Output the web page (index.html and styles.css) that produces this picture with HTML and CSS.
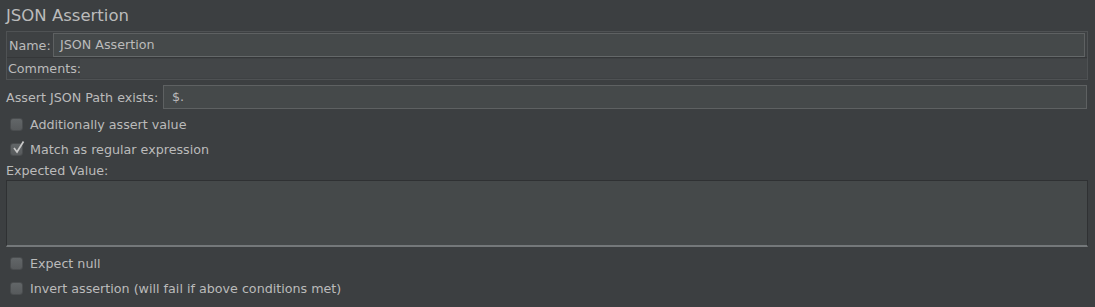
FILE: index.html
```html
<!DOCTYPE html>
<html>
<head>
<meta charset="utf-8">
<link rel="stylesheet" href="styles.css">
</head>
<body>
<div class="page">
  <div class="title">JSON Assertion</div>
  <div class="panel">
    <div class="name-row">
      <span class="label">Name:</span>
      <div class="field name-field">JSON Assertion</div>
    </div>
    <div class="comments-row">
      <span class="label">Comments:</span>
      <div class="comments-field"></div>
    </div>
  </div>
  <div class="path-row">
    <span class="label">Assert JSON Path exists:</span>
    <div class="field path-field">$.</div>
  </div>
  <div class="check-row">
    <span class="box"></span><span class="label">Additionally assert value</span>
  </div>
  <div class="check-row">
    <span class="box checked"><svg viewBox="0 0 15 15" width="15" height="15"><path d="M3 8 L6 12 L12.5 1.5" fill="none" stroke="#c8c8c8" stroke-width="1.7"/></svg></span><span class="label">Match as regular expression</span>
  </div>
  <div class="expected-label">Expected Value:</div>
  <div class="textarea"></div>
  <div class="check-row after">
    <span class="box"></span><span class="label">Expect null</span>
  </div>
  <div class="check-row">
    <span class="box"></span><span class="label">Invert assertion (will fail if above conditions met)</span>
  </div>
</div>
</body>
</html>
```
FILE: styles.css
```css
html, body {
  margin: 0;
  padding: 0;
  background: #3c3f41;
}
.page {
  width: 1095px;
  height: 307px;
  overflow: hidden;
  font-family: "DejaVu Sans", sans-serif;
  font-size: 12.7px;
  color: #bbbbbb;
  display: flex;
  flex-direction: column;
}
.title {
  height: 31px;
  line-height: 31px;
  padding-left: 6px;
  font-size: 16.5px;
  box-sizing: border-box;
}
.panel {
  margin: 0 7px 0 6px;
  border: 1px solid #4f5254;
  height: 49px;
  box-sizing: border-box;
  display: flex;
  flex-direction: column;
  background: #3e4143;
}
.name-row {
  display: flex;
  align-items: center;
  height: 26px;
  padding: 1px 1px 0 2px;
  box-sizing: border-box;
}
.name-row .label {
  width: 44px;
}
.field {
  background: #45494a;
  border: 1px solid #5e6162;
  box-sizing: border-box;
  height: 24px;
  line-height: 22px;
  padding-left: 6px;
  color: #bbbbbb;
}
.name-field {
  flex: 1;
  margin-right: 1px;
  border-bottom-color: #646869;
}
.comments-row {
  display: flex;
  align-items: center;
  height: 21px;
  padding-left: 1px;
  border-top: 1px solid #353739;
}
.comments-row .label {
  width: 72px;
}
.comments-field {
  flex: 1;
  height: 19px;
  background: #434648;
}
.path-row {
  display: flex;
  align-items: center;
  margin: 5px 8px 0 6px;
  height: 24px;
}
.path-row .label {
  width: 157px;
}
.path-field {
  flex: 1;
  padding-left: 8px;
}
.check-row {
  display: flex;
  align-items: center;
  height: 25px;
  padding-left: 10px;
}
.path-row + .check-row {
  margin-top: 3px;
}
.box {
  width: 13px;
  height: 13px;
  box-sizing: border-box;
  border: 1px solid #4a4d4f;
  border-radius: 3px;
  background: linear-gradient(#626668, #575a5c);
  margin-right: 7px;
  position: relative;
  flex: none;
}
.box svg {
  position: absolute;
  left: 0;
  top: -4px;
}
.expected-label {
  height: 19px;
  line-height: 20px;
  padding-left: 6px;
  margin-top: -1px;
}
.textarea {
  margin: 0 7px 0 6px;
  height: 67px;
  box-sizing: border-box;
  background: #45494a;
  border: 1px solid #2f3133;
  border-bottom: 2px solid #74787a;
}
.check-row.after {
  margin-top: 4px;
}
```
